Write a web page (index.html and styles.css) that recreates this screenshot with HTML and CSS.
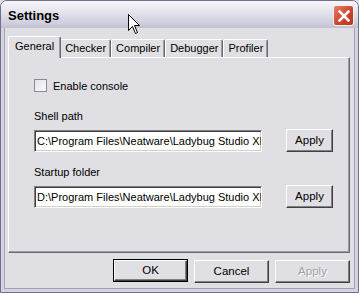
FILE: index.html
```html
<!DOCTYPE html>
<html lang="en">
<head>
    <meta charset="UTF-8">
    <title>Settings</title>
    <link rel="stylesheet" href="styles.css">
</head>
<body>
    <div class="window">
        <div class="titlebar">
            <span class="title">Settings</span>
            <div class="close">
                <svg width="12" height="12" viewBox="0 0 12 12">
                    <path d="M1.5 1.5 L10.5 10.5 M10.5 1.5 L1.5 10.5" stroke="#fff" stroke-width="2.6" stroke-linecap="square"/>
                </svg>
            </div>
        </div>
        <div class="frame">
            <div class="tabs">
                <div class="tab active">General</div>
                <div class="tab">Checker</div>
                <div class="tab">Compiler</div>
                <div class="tab">Debugger</div>
                <div class="tab">Profiler</div>
            </div>
            <div class="panel">
                <div class="check">
                    <span class="box"></span>
                    <span>Enable console</span>
                </div>
                <div class="label first">Shell path</div>
                <div class="row">
                    <div class="input">C:\Program Files\Neatware\Ladybug Studio XP</div>
                    <div class="button small">Apply</div>
                </div>
                <div class="label">Startup folder</div>
                <div class="row">
                    <div class="input">D:\Program Files\Neatware\Ladybug Studio XP</div>
                    <div class="button small">Apply</div>
                </div>
            </div>
            <div class="footer">
                <div class="button default">OK</div>
                <div class="button">Cancel</div>
                <div class="button disabled">Apply</div>
            </div>
        </div>
    </div>

    <!-- mouse pointer -->
    <svg class="cursor" width="13" height="21" viewBox="0 0 13 21">
        <path d="M0.5 0.5 L0.5 16.5 L4.5 12.5 L7.5 19.5 L9.5 18.5 L6.5 11.5 L11.5 11.5 Z" fill="#fff" stroke="#000" stroke-width="1"/>
    </svg>
</body>
</html>
```

FILE: styles.css
```css
body {
    margin: 0;
    background: #e0dfe3;
    font-family: "Liberation Sans", Arial, sans-serif;
    font-size: 11px;
    color: #000;
}

.window {
    position: relative;
    width: 359px;
    height: 293px;
    box-sizing: border-box;
    border: 1px solid #6f6f88;
    border-radius: 7px 7px 0 0;
    background: #e0dfe3;
    overflow: hidden;
    display: flex;
    flex-direction: column;
}

.titlebar {
    height: 27px;
    display: flex;
    align-items: center;
    justify-content: space-between;
    padding: 0 4px 0 7px;
    background: linear-gradient(#f7f7fa, #e4e4ed 40%, #cdcddc 85%, #c0c0d2);
}

.title {
    font-weight: bold;
    font-size: 13px;
    color: #000;
    padding-top: 2px;
}

.close {
    width: 19px;
    height: 19px;
    border: 1px solid #f2f2f2;
    border-radius: 3px;
    background: linear-gradient(135deg, #e6806c, #d0442e 55%, #b5361f);
    display: flex;
    align-items: center;
    justify-content: center;
    margin-top: 2px;
}

.frame {
    flex: 1;
    border: 3px solid #d4d4e0;
    border-top: none;
    box-shadow: inset 1px 0 0 #a2a2b6, inset -1px 0 0 #a2a2b6, inset 0 -1px 0 #a2a2b6;
    padding: 8px 4px 0 4px;
}

.tabs {
    display: flex;
    align-items: flex-end;
    height: 21px;
    padding-left: 2px;
}

.tab {
    height: 17px;
    line-height: 17px;
    padding: 0 4px 0 4px;
    border-top: 1px solid #fff;
    border-left: 1px solid #fff;
    border-right: 1px solid #6a6a70;
    box-shadow: inset -1px 0 0 #9c9ca8;
    border-radius: 2px 2px 0 0;
}

.tab.active {
    height: 21px;
    line-height: 19px;
    padding: 0 6px;
    margin: 0 -1px -1px -2px;
    position: relative;
    z-index: 1;
    background: #e0dfe3;
}

.panel {
    height: 173px;
    margin-right: 1px;
    border-top: 1px solid #fff;
    border-left: 1px solid #fff;
    border-right: 1px solid #6a6a70;
    border-bottom: 1px solid #6a6a70;
    box-shadow: inset -1px -1px 0 #9c9ca8;
    padding: 21px 0 0 25px;
}

.check {
    display: flex;
    align-items: center;
    height: 13px;
}

.box {
    width: 11px;
    height: 11px;
    border: 1px solid #8a8a96;
    background: linear-gradient(135deg, #e4e4e8, #fafafa);
    margin-right: 6px;
}

.label {
    margin-top: 14px;
    line-height: 13px;
}

.label.first {
    margin-top: 18px;
}

.row {
    display: flex;
    align-items: center;
    margin-top: 6px;
}

.input {
    width: 224px;
    height: 20px;
    line-height: 20px;
    padding-left: 2px;
    background: #fff;
    border-top: 1px solid #808080;
    border-left: 1px solid #808080;
    border-right: 1px solid #fff;
    border-bottom: 1px solid #fff;
    box-shadow: inset 1px 1px 0 #404040, inset -1px -1px 0 #d4d0c8;
    overflow: hidden;
    white-space: nowrap;
    font-size: 11px;
}

.button {
    width: 73px;
    height: 21px;
    line-height: 21px;
    text-align: center;
    border-top: 1px solid #fff;
    border-left: 1px solid #fff;
    border-right: 1px solid #404040;
    border-bottom: 1px solid #404040;
    box-shadow: inset -1px -1px 0 #808080;
    background: #e0dfe3;
    font-size: 11.5px;
}

.button.small {
    width: 45px;
    margin-left: 24px;
}

.button.default {
    outline: 1px solid #000;
    width: 71px;
    height: 19px;
    line-height: 19px;
    margin-right: 1px;
}

.button.disabled {
    color: #a0a0a8;
    text-shadow: 1px 1px 0 #fff;
}

.footer {
    display: flex;
    justify-content: flex-end;
    gap: 6px;
    margin-top: 7px;
    padding-right: 1px;
}

.cursor {
    position: absolute;
    left: 128px;
    top: 14px;
}
```
